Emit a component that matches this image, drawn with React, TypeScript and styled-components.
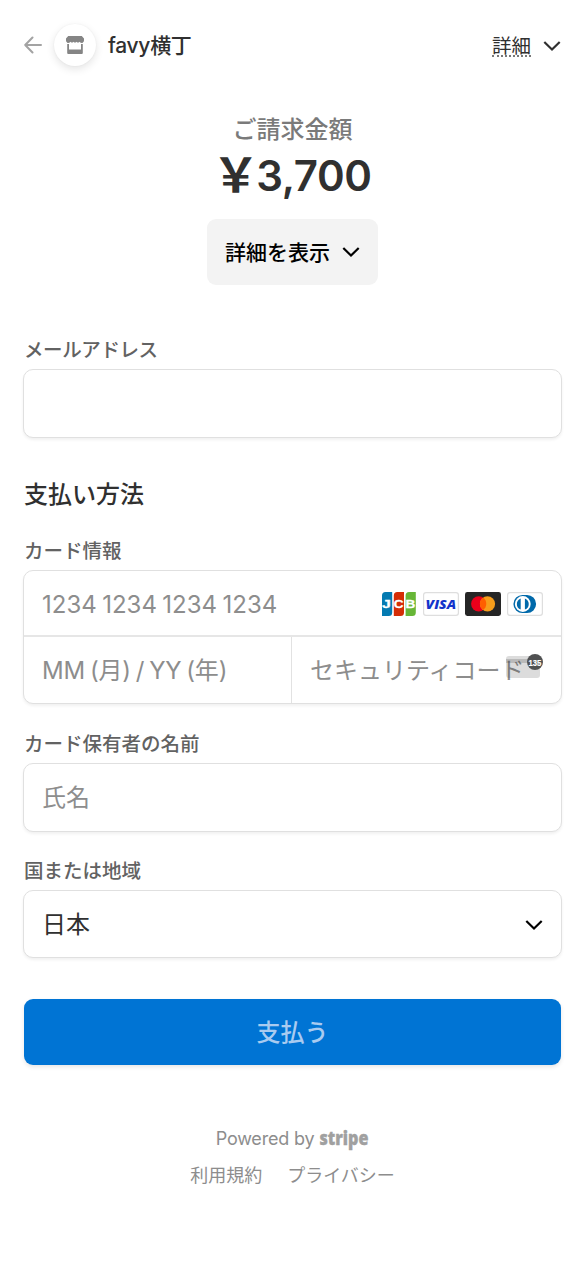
import React from 'react';
import styled, { createGlobalStyle } from 'styled-components';

const Global = createGlobalStyle`
  * { box-sizing: border-box; }
  body {
    margin: 0;
    background: #fff;
    color: #303030;
    font-family: Inter, "Noto Sans CJK JP", sans-serif;
    -webkit-font-smoothing: antialiased;
  }
  button, input, select { font: inherit; }
`;

const Page = styled.main`
  width: 586px;
  height: 1266px;
  padding: 0 25px 0 24px;
  overflow: hidden;
`;

const Header = styled.header`
  display: flex;
  align-items: center;
  height: 90px;
`;

const Avatar = styled.div`
  display: flex;
  align-items: center;
  justify-content: center;
  width: 42px;
  height: 42px;
  margin: 0 12px;
  border-radius: 50%;
  background: #fff;
  box-shadow: 0 3px 8px rgba(0, 0, 0, 0.11), 0 0 2px rgba(0, 0, 0, 0.05);
`;

const Merchant = styled.div`
  flex: 1;
  padding-top: 2px;
  font-size: 21px;
  font-weight: 500;
  line-height: 30px;
  letter-spacing: -0.3px;
`;

const DetailsLink = styled.a`
  display: flex;
  align-items: center;
  gap: 12px;
  padding-top: 2px;
  font-size: 19.5px;
  line-height: 30px;
`;

const Dotted = styled.span`
  height: 21px;
  line-height: 21px;
  border-bottom: 2px dotted #777;
`;

const Summary = styled.section`
  display: flex;
  flex-direction: column;
  align-items: center;
  padding-top: 25px;
`;

const SummaryLabel = styled.div`
  height: 30px;
  font-size: 24px;
  line-height: 30px;
  font-weight: 500;
  color: #7a7a7a;
`;

const Amount = styled.div`
  display: flex;
  align-items: center;
  height: 62px;
  margin: 0 0 12px 0;
  font-size: 42px;
  font-weight: 600;
  line-height: 62px;
  letter-spacing: -0.4px;
`;

const Currency = styled.span`
  margin-left: -1px;
  padding-bottom: 2px;
  font-size: 47px;
  letter-spacing: -3px;
`;

const ShowDetails = styled.button`
  display: flex;
  align-items: center;
  justify-content: center;
  gap: 12px;
  width: 171px;
  height: 66px;
  padding: 0;
  border: 0;
  border-radius: 9px;
  background: #f3f3f3;
  color: #000;
  font-size: 21px;
  font-weight: 500;
`;

const ShowDetailsText = styled.span`
  padding-bottom: 2px;
`;

const Form = styled.form`
  display: flex;
  flex-direction: column;
  margin: 0 -1px;
  padding-top: 50px;
`;

const Label = styled.label<{ $gap?: number; $tight?: boolean }>`
  height: 30px;
  margin: ${(p) => p.$gap ?? 0}px 0 4px 1px;
  font-size: 19.5px;
  font-weight: 500;
  line-height: 30px;
  letter-spacing: ${(p) => (p.$tight ? '-0.4px' : '0')};
  color: #626262;
`;

const Box = styled.div<{ $h: number }>`
  display: flex;
  flex-direction: column;
  height: ${(p) => p.$h}px;
  border: 1.5px solid #e0e0e0;
  border-radius: 10px;
  background: #fff;
  box-shadow: 0 2px 3px rgba(0, 0, 0, 0.06);
`;

const Line = styled.div<{ $ruled?: boolean; $drop?: number }>`
  display: flex;
  flex: ${(p) => (p.$ruled ? '0 0 66px' : '1')};
  align-items: center;
  border-bottom: ${(p) => (p.$ruled ? '2px solid #e6e6e6' : '0')};
  & > div { padding-top: ${(p) => p.$drop ?? 0}px; }
`;

const Cell = styled.div<{ $w?: number; $ink?: string }>`
  position: relative;
  display: flex;
  align-items: center;
  justify-content: space-between;
  flex: ${(p) => (p.$w ? `0 0 ${p.$w}px` : '1')};
  align-self: stretch;
  padding: 0 18px;
  border-right: ${(p) => (p.$w ? '1.5px solid #e2e2e2' : '0')};
  font-size: 24px;
  line-height: 36px;
  white-space: nowrap;
  color: ${(p) => p.$ink ?? '#8d8d8d'};
`;

const CardNumber = styled.span`
  padding-top: 2px;
  word-spacing: -1.3px;
`;

const Expiry = styled.span`
  letter-spacing: -0.2px;
  word-spacing: -1.6px;
`;

const Brands = styled.div`
  display: flex;
  gap: 6px;
`;

const CvcBadge = styled.div`
  position: absolute;
  right: 18px;
  top: 15px;
  display: flex;
`;

const SectionTitle = styled.h2`
  height: 36px;
  margin: 39px 0 0 1px;
  font-size: 24px;
  font-weight: 500;
  line-height: 36px;
`;

const Pay = styled.button`
  height: 66px;
  margin: 41px 1px 0;
  padding: 0 0 4px;
  border: 0;
  border-radius: 9px;
  background: #0074d4;
  color: #a9cbf0;
  font-size: 24px;
  font-weight: 500;
  box-shadow: 0 2px 4px rgba(0, 0, 0, 0.1);
`;

const Footer = styled.footer`
  display: flex;
  flex-direction: column;
  align-items: center;
  padding-top: 56px;
  font-size: 18px;
  color: #8d8d8d;
`;

const FooterRow = styled.div<{ $gap: number; $track?: number; $drop?: number }>`
  display: flex;
  align-items: center;
  gap: ${(p) => p.$gap}px;
  height: 36px;
  margin-top: ${(p) => p.$drop ?? 0}px;
  line-height: 36px;
  letter-spacing: ${(p) => p.$track ?? 0}px;
`;

const Chevron = ({ color = '#303030' }: { color?: string }) => (
  <svg width="18" height="12" viewBox="0 0 18 12" fill="none">
    <path d="M1.3 2L9 9.5L16.7 2" stroke={color} strokeWidth="2.2" />
  </svg>
);

const BackArrow = () => (
  <svg width="18" height="18" viewBox="0 0 18 18" fill="none" stroke="#a3a3a3" strokeWidth="2" strokeLinecap="round" strokeLinejoin="round">
    <path d="M8.5 1.5L1.2 9L8.5 16.5M1.2 9H17" />
  </svg>
);

const Store = () => (
  <svg width="18" height="18" viewBox="0 0 18 18">
    <path fill="#858585" d="M2.2 0H15.8L18 2.4V4.6A2.4 2.4 0 0 1 16.8 6.6V17A1 1 0 0 1 15.8 18H2.2A1 1 0 0 1 1.2 17V6.6A2.4 2.4 0 0 1 0 4.6V2.4Z" />
    <path fill="#fff" d="M1 6.7Q3 7.4 4.5 5.7Q6 7.4 7.5 5.7Q9 7.4 10.5 5.7Q12 7.4 13.5 5.7Q15 7.4 17 6.7V8H15V13.5H3V8H1Z" />
  </svg>
);

const Jcb = () => (
  <svg width="36" height="24" viewBox="0 0 36 24">
    {[['#047ab1', 1], ['#d42d06', 12.8], ['#67b637', 24.6]].map(([fill, x]) => (
      <path key={fill} fill={fill as string} transform={`translate(${x} 0)`} d="M3.5 0H10.2V20.5A3.5 3.5 0 0 1 6.7 24H0V3.5A3.5 3.5 0 0 1 3.5 0Z" />
    ))}
    <g fill="#fff" stroke="#fff" strokeWidth=".3" fontFamily="Liberation Sans" fontWeight="700" fontSize="11.5">
      <text x="1" y="16" textLength="8.8" lengthAdjust="spacingAndGlyphs">J</text>
      <text x="12.8" y="16" textLength="9.8" lengthAdjust="spacingAndGlyphs">C</text>
      <text x="24.6" y="16" textLength="9.8" lengthAdjust="spacingAndGlyphs">B</text>
    </g>
  </svg>
);

const Visa = () => (
  <svg width="36" height="24" viewBox="0 0 36 24">
    <rect x=".6" y=".6" width="34.8" height="22.8" rx="2.4" fill="#fff" stroke="#dedede" strokeWidth="1.2" />
    <text x="2.6" y="16.6" fill="#1434cb" fontFamily="Open Sans" fontStyle="italic" fontWeight="800" fontSize="13" textLength="30.5" lengthAdjust="spacingAndGlyphs">VISA</text>
  </svg>
);

const Mastercard = () => (
  <svg width="36" height="24" viewBox="0 0 36 24">
    <rect width="36" height="24" rx="2.4" fill="#252525" />
    <circle cx="13.7" cy="11.8" r="7.6" fill="#eb001b" />
    <circle cx="22.5" cy="11.8" r="7.6" fill="#f79e1b" />
    <path d="M18.1 5.6A7.6 7.6 0 0 1 18.1 18A7.6 7.6 0 0 1 18.1 5.6Z" fill="#ff5f00" />
  </svg>
);

const Diners = () => (
  <svg width="36" height="24" viewBox="0 0 36 24">
    <rect x=".6" y=".6" width="34.8" height="22.8" rx="2.4" fill="#fff" stroke="#dedede" strokeWidth="1.2" />
    <path d="M15.5 2.9H20A9.1 9.1 0 0 1 20 21.1H15.5A9.1 9.1 0 0 1 15.5 2.9Z" fill="#0069aa" />
    <circle cx="15.8" cy="12" r="7.9" fill="#fff" />
    <path d="M13.7 6.4A6 6 0 0 0 13.7 17.6ZM17.9 6.4A6 6 0 0 1 17.9 17.6Z" fill="#0069aa" />
  </svg>
);

const CvcIcon = () => (
  <svg width="38" height="28" viewBox="0 0 38 28">
    <rect x="1" y="4" width="34" height="22" rx="3" fill="#303030" fillOpacity=".17" />
    <rect x="1" y="7" width="34" height="4" fill="#303030" fillOpacity=".2" />
    <circle cx="30" cy="10" r="8" fill="#505152" />
    <text x="23.6" y="13.5" fill="#fff" stroke="#fff" strokeWidth=".2" fontFamily="Liberation Sans" fontWeight="700" fontSize="9.5" textLength="12.8" lengthAdjust="spacingAndGlyphs">135</text>
  </svg>
);

const StripeWordmark = () => (
  <svg width="50" height="36" viewBox="0 0 50 36" overflow="visible">
    <text x="0.5" y="24" fill="#a0a0a0" stroke="#a0a0a0" strokeWidth=".4" fontFamily="Open Sans" fontWeight="800" fontSize="20" letterSpacing="0" textLength="49" lengthAdjust="spacingAndGlyphs">stripe</text>
  </svg>
);

export default function App() {
  return (
    <>
      <Global />
      <Page>
        <Header>
          <BackArrow />
          <Avatar><Store /></Avatar>
          <Merchant>favy横丁</Merchant>
          <DetailsLink><Dotted>詳細</Dotted><Chevron /></DetailsLink>
        </Header>
        <Summary>
          <SummaryLabel>ご請求金額</SummaryLabel>
          <Amount><Currency>￥</Currency>3,700</Amount>
          <ShowDetails><ShowDetailsText>詳細を表示</ShowDetailsText><Chevron color="#000" /></ShowDetails>
        </Summary>
        <Form>
          <Label $tight>メールアドレス</Label>
          <Box $h={69} />
          <SectionTitle>支払い方法</SectionTitle>
          <Label $gap={23}>カード情報</Label>
          <Box $h={134}>
            <Line $ruled $drop={2}>
              <Cell>
                <CardNumber>1234 1234 1234 1234</CardNumber>
                <Brands><Jcb /><Visa /><Mastercard /><Diners /></Brands>
              </Cell>
            </Line>
            <Line $drop={2}>
              <Cell $w={268}><Expiry>MM (月) / YY (年)</Expiry></Cell>
              <Cell>セキュリティコード<CvcBadge><CvcIcon /></CvcBadge></Cell>
            </Line>
          </Box>
          <Label $gap={25}>カード保有者の名前</Label>
          <Box $h={69}><Line><Cell>氏名</Cell></Line></Box>
          <Label $gap={24}>国または地域</Label>
          <Box $h={68}><Line $drop={2}><Cell $ink="#303030">日本<Chevron color="#000" /></Cell></Line></Box>
          <Pay type="button">支払う</Pay>
        </Form>
        <Footer>
          <FooterRow $gap={5} $track={-0.2}>Powered by <StripeWordmark /></FooterRow>
          <FooterRow $gap={25} $drop={1}><span>利用規約</span><span>プライバシー</span></FooterRow>
        </Footer>
      </Page>
    </>
  );
}
